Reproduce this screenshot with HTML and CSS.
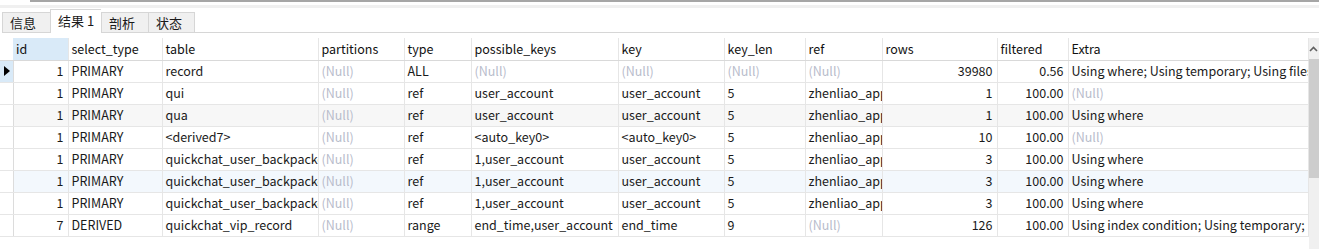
FILE: index.html
```html
<!DOCTYPE html>
<html>
<head>
<meta charset="utf-8">
<link rel="stylesheet" href="styles.css">
</head>
<body>
<div class="topline"></div>
<div class="band"></div>
<div class="tabs">
  <div class="tab">信息</div>
  <div class="tab active">结果 1</div>
  <div class="tab">剖析</div>
  <div class="tab">状态</div>
  <div class="tabfill"></div>
</div>
<div class="gap"></div>
<div class="main">
  <table class="grid">
    <colgroup>
      <col style="width:13px"><col style="width:55px"><col style="width:94px"><col style="width:156px"><col style="width:86px"><col style="width:67px"><col style="width:147px"><col style="width:106px"><col style="width:81px"><col style="width:77px"><col style="width:115px"><col style="width:71px"><col style="width:240px">
    </colgroup>
    <thead>
      <tr><th class="ind"></th><th class="sel">id</th><th>select_type</th><th>table</th><th>partitions</th><th>type</th><th>possible_keys</th><th>key</th><th>key_len</th><th>ref</th><th>rows</th><th>filtered</th><th>Extra</th></tr>
    </thead>
    <tbody>
      <tr><td class="ind cur"><span class="tri"></span></td><td class="n">1</td><td>PRIMARY</td><td>record</td><td class="nl">(Null)</td><td>ALL</td><td class="nl">(Null)</td><td class="nl">(Null)</td><td class="nl">(Null)</td><td class="nl">(Null)</td><td class="n">39980</td><td class="n">0.56</td><td>Using where; Using temporary; Using filesort</td></tr>
      <tr><td class="ind"></td><td class="n">1</td><td>PRIMARY</td><td>qui</td><td class="nl">(Null)</td><td>ref</td><td>user_account</td><td>user_account</td><td>5</td><td>zhenliao_app.record.user_account</td><td class="n">1</td><td class="n">100.00</td><td class="nl">(Null)</td></tr>
      <tr class="alt"><td class="ind"></td><td class="n">1</td><td>PRIMARY</td><td>qua</td><td class="nl">(Null)</td><td>ref</td><td>user_account</td><td>user_account</td><td>5</td><td>zhenliao_app.record.user_account</td><td class="n">1</td><td class="n">100.00</td><td>Using where</td></tr>
      <tr><td class="ind"></td><td class="n">1</td><td>PRIMARY</td><td>&lt;derived7&gt;</td><td class="nl">(Null)</td><td>ref</td><td>&lt;auto_key0&gt;</td><td>&lt;auto_key0&gt;</td><td>5</td><td>zhenliao_app.record.user_account</td><td class="n">10</td><td class="n">100.00</td><td class="nl">(Null)</td></tr>
      <tr><td class="ind"></td><td class="n">1</td><td>PRIMARY</td><td>quickchat_user_backpacket</td><td class="nl">(Null)</td><td>ref</td><td>1,user_account</td><td>user_account</td><td>5</td><td>zhenliao_app.record.user_account</td><td class="n">3</td><td class="n">100.00</td><td>Using where</td></tr>
      <tr class="hov"><td class="ind"></td><td class="n">1</td><td>PRIMARY</td><td>quickchat_user_backpacket</td><td class="nl">(Null)</td><td>ref</td><td>1,user_account</td><td>user_account</td><td>5</td><td>zhenliao_app.record.user_account</td><td class="n">3</td><td class="n">100.00</td><td>Using where</td></tr>
      <tr><td class="ind"></td><td class="n">1</td><td>PRIMARY</td><td>quickchat_user_backpacket</td><td class="nl">(Null)</td><td>ref</td><td>1,user_account</td><td>user_account</td><td>5</td><td>zhenliao_app.record.user_account</td><td class="n">3</td><td class="n">100.00</td><td>Using where</td></tr>
      <tr><td class="ind"></td><td class="n">7</td><td>DERIVED</td><td>quickchat_vip_record</td><td class="nl">(Null)</td><td>range</td><td>end_time,user_account</td><td>end_time</td><td>9</td><td class="nl">(Null)</td><td class="n">126</td><td class="n">100.00</td><td>Using index condition; Using temporary; Using filesort</td></tr>
    </tbody>
  </table>
  <div class="vscroll">
    <div class="up"><svg width="9" height="6" viewBox="0 0 9 6"><path d="M1 5 L4.5 1.5 L8 5" fill="none" stroke="#606060" stroke-width="1.6"/></svg></div>
    <div class="thumb"></div>
  </div>
</div>
</body>
</html>
```
FILE: styles.css
```css
html, body {
  margin: 0;
  padding: 0;
  background: #ffffff;
  width: 1319px;
  height: 249px;
  overflow: hidden;
  font-family: "Noto Sans CJK SC", "Noto Sans", sans-serif;
  font-size: 12.5px;
  color: #1a1a1a;
}
.topline {
  height: 2px;
  margin-left: 30px;
  background: #a6a6a6;
}
.band {
  height: 3px;
  margin-top: 3px;
  background: #f0f0f0;
}
.tabs {
  display: flex;
  align-items: flex-end;
  height: 24px;
  margin-top: 1px;
}
.tab {
  box-sizing: border-box;
  height: 21px;
  background: #f0f0f0;
  border: 1px solid #d6d6d6;
  border-right: none;
  display: flex;
  align-items: center;
  padding-left: 7px;
  line-height: 1;
  width: 47px;
  font-size: 13px;
}
.tab:first-child { margin-left: 2px; width: 48px; }
.tab:nth-child(4) { border-right: 1px solid #d6d6d6; width: 47px; }
.tab.active {
  height: 24px;
  background: #ffffff;
  border-bottom: none;
  width: 51px;
  padding-left: 7px;
  padding-bottom: 2px;
}
.tabfill {
  flex: 1;
  height: 1px;
  background: #d6d6d6;
}
.gap { height: 5px; }
.main {
  display: flex;
  height: 212px;
}
.grid {
  border-collapse: collapse;
  table-layout: fixed;
  width: 1308px;
  align-self: flex-start;
}
.grid th, .grid td {
  box-sizing: border-box;
  height: 22px;
  padding: 0 4px 0 3px;
  white-space: nowrap;
  overflow: hidden;
  text-overflow: clip;
  text-align: left;
  font-weight: normal;
  border-right: 1px solid #e6e6e6;
  border-bottom: 1px solid #e6e6e6;
  line-height: 20px;
  color: #1a1a1a;
}
.grid th {
  border-bottom: 1px solid #d9d9d9;
  color: #111111;
}
.grid th.ind { border-right: none; }
.grid th.sel { background: #d9eaf8; }
.grid td.ind {
  padding: 0;
  background: #ffffff;
  border-right: 1px solid #dcdcdc;
}
.grid td.cur { background: #d9eaf8; }
.tri {
  display: block;
  width: 0;
  height: 0;
  margin-left: 4px;
  border-top: 5px solid transparent;
  border-bottom: 5px solid transparent;
  border-left: 6px solid #000000;
}
.grid td.n { text-align: right; }
.grid td.nl { color: #b8bccb; }
.grid tr.alt td { background: #f7f7f7; }
.grid tr.hov td { background: #f3f8fd; }
.grid tr.alt td.ind, .grid tr.hov td.ind { background: #ffffff; }
.vscroll {
  width: 11px;
  background: #f0f0f0;
  display: flex;
  flex-direction: column;
}
.up {
  height: 21px;
  display: flex;
  align-items: center;
  justify-content: center;
}
.thumb {
  height: 119px;
  background: #cdcdcd;
}
```
